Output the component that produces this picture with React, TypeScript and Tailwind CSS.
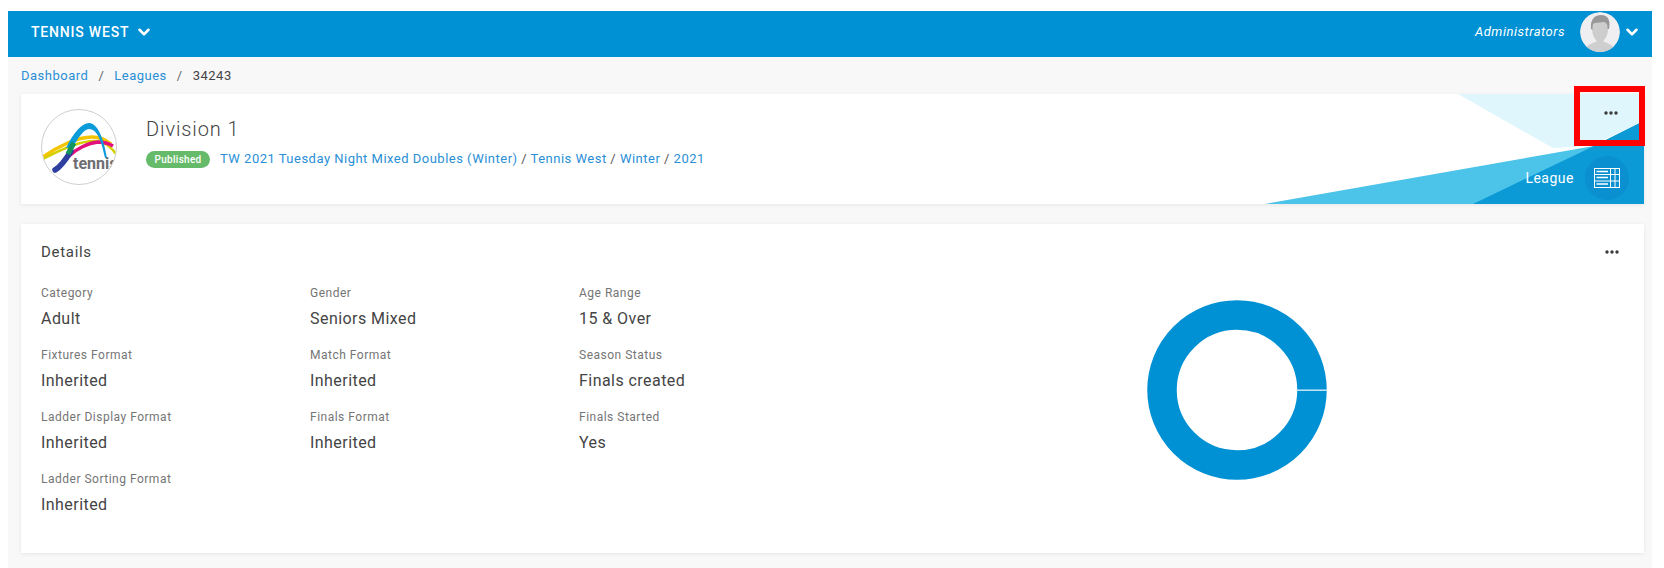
import React from "react";
import { ChevronDown } from "lucide-react";

const F = { fontFamily: "Roboto, sans-serif" };

const rows = [
  [["Category", "Adult"], ["Gender", "Seniors Mixed"], ["Age Range", "15 & Over"]],
  [["Fixtures Format", "Inherited"], ["Match Format", "Inherited"], ["Season Status", "Finals created"]],
  [["Ladder Display Format", "Inherited"], ["Finals Format", "Inherited"], ["Finals Started", "Yes"]],
  [["Ladder Sorting Format", "Inherited"]],
];

function Dots() {
  return (
    <svg width="14" height="4" viewBox="0 0 14 4" className="block">
      <circle cx="2" cy="2" r="1.7" fill="#3a3a3a" />
      <circle cx="7" cy="2" r="1.7" fill="#3a3a3a" />
      <circle cx="12" cy="2" r="1.7" fill="#3a3a3a" />
    </svg>
  );
}

function Logo() {
  return (
    <div className="w-[76px] h-[76px] mb-[4px] rounded-full border border-[#cfcfcf] bg-white overflow-hidden shrink-0">
      <svg width="74" height="74" viewBox="0 0 74 74" fill="none">
        <path d="M1 47 C15 37 35 27 50 27 C58 27 64 30 69 34" stroke="#f5c400" strokeWidth="3.5" />
        <path d="M1 49 C16 41 36 31 52 31 C62 31 70 38 75 45" stroke="#d3d000" strokeWidth="2.5" />
        <path d="M27 46 C34 39 46 33 56 32 C62 32 66 33 71 36" stroke="#e0107c" strokeWidth="3.5" />
        <path d="M24 38 C32 22 40 13 47 13 C56 13 62 30 65 48 L63 48 C60 34 56 19 47 19 C42 19 36 28 31 37 Z" fill="#0b9bd8" />
        <path d="M13 60 C20 56 26 46 29 41" stroke="#2f3f9f" strokeWidth="5.5" strokeLinecap="round" />
        <path d="M26 44 C28 40 30 36 32 33" stroke="#12955a" strokeWidth="5" />
        <text x="31" y="59" fill="#6d6e71" fontSize="16" fontWeight="700" style={F}>tennis</text>
      </svg>
    </div>
  );
}

function Avatar() {
  return (
    <svg width="40" height="40" viewBox="0 0 40 40" className="block rounded-full">
      <circle cx="20" cy="20" r="20" fill="#efeef0" />
      <path d="M4 37 C8 32 14 31 17 29 L23 29 C26 31 32 32 36 37 C30 42 10 42 4 37Z" fill="#cfcfcf" />
      <path d="M12 16 C11 7 15 4 21 4 C27 4 30 8 28 17 C28 24 24 30 20 30 C16 30 12 24 12 16Z" fill="#cdcdcd" />
      <path d="M11 17 C10 7 15 3 21 3 C27 3 31 7 29 17 L27.5 17 C28 12 26 10 23 10 C19 11 15 10 13 12 C12.5 14 12.5 16 12.5 18Z" fill="#989898" />
    </svg>
  );
}

export default function App() {
  return (
    <div className="bg-white h-[568px] pt-[11px] pl-[8px] pr-[12px] overflow-hidden" style={F}>
      <div className="bg-[#f8f8f8] h-[557px] flex flex-col">
        <header className="h-[46px] bg-[#0090d4] flex items-center justify-between pl-[23px] pr-[11px] pb-[4px] text-white shrink-0">
          <div className="flex items-center gap-[6px] text-[14px] font-medium tracking-[0.8px]">
            <span>TENNIS WEST</span>
            <ChevronDown size={18} strokeWidth={3.4} />
          </div>
          <div className="flex items-center">
            <span className="text-[13px] italic tracking-[0.5px] mr-[15px]">Administrators</span>
            <Avatar />
            <ChevronDown size={18} strokeWidth={3.4} className="ml-[3px]" />
          </div>
        </header>

        <nav className="h-[37px] flex items-center pl-[13px] text-[13px] tracking-[0.5px] text-[#444] shrink-0">
          <span className="text-[#2a8fd6]">Dashboard</span>
          <span className="mx-[10px] text-[#666]">/</span>
          <span className="text-[#2a8fd6]">Leagues</span>
          <span className="mx-[10px] text-[#666]">/</span>
          <span>34243</span>
        </nav>

        <section className="relative ml-[13px] mr-[8px] h-[110px] bg-white shadow-[0_1px_4px_rgba(0,0,0,0.08)] flex items-center pl-[20px] shrink-0">
          <Logo />
          <div className="ml-[29px] mb-[14px]">
            <h1 className="text-[20px] leading-[28px] font-light tracking-[0.9px] text-[#444]">Division 1</h1>
            <div className="flex items-center mt-[6px]">
              <span className="w-[64px] h-[17px] rounded-full bg-[#66bb6a] text-white text-[10px] font-medium tracking-[0.3px] flex items-center justify-center">Published</span>
              <span className="ml-[10px] text-[13px] tracking-[0.49px] text-[#555]">
                <span className="text-[#2a8fd6]">TW 2021 Tuesday Night Mixed Doubles (Winter)</span>
                {" / "}
                <span className="text-[#2a8fd6]">Tennis West</span>
                {" / "}
                <span className="text-[#2a8fd6]">Winter</span>
                {" / "}
                <span className="text-[#2a8fd6]">2021</span>
              </span>
            </div>
          </div>

          <svg className="absolute right-0 top-0" width="380" height="110" viewBox="0 0 380 110">
            <polygon points="194,0 380,0 380,27 326,52 289,54" fill="#dff6fc" />
            <polygon points="1,110 330,52 380,27 380,110" fill="#4cc3e8" />
            <polygon points="330,52 380,27 380,50 305,66" fill="#2a9fdc" />
            <polygon points="209,110 330,52 380,27 380,110" fill="#0c9ad6" />
          </svg>
          <div className="absolute right-[15px] top-[62px] flex items-center text-white">
            <span className="text-[14px] tracking-[0.5px] mr-[11px]">League</span>
            <div className="w-[44px] h-[44px] rounded-full bg-[#0a8fd0] flex items-center justify-center">
              <svg width="26" height="20" viewBox="0 0 26 20" fill="none" stroke="#fff" strokeWidth="1">
                <rect x="0.5" y="0.5" width="25" height="19" />
                <path d="M16.5 0.5V19.5M21 0.5V19.5M0.5 6.5H25.5M0.5 13H25.5" />
                <path d="M2.5 3.5H14M2.5 9.5H14M2.5 16H14" strokeWidth="1.6" />
              </svg>
            </div>
          </div>
          <div className="absolute right-[26px] top-[17px]"><Dots /></div>
          <div className="absolute right-[-1px] top-[-8px] w-[71px] h-[60px] border-[6px] border-[#ff0000]" />
        </section>

        <section className="ml-[13px] mr-[8px] mt-[20px] h-[329px] bg-white shadow-[0_1px_4px_rgba(0,0,0,0.08)] px-[20px] relative shrink-0 flex">
          <div className="w-[807px] shrink-0">
            <div className="h-[56px] flex items-center text-[15px] tracking-[0.7px] text-[#444]">Details</div>
            <div className="flex flex-col mt-[4px]">
              {rows.map((row, i) => (
                <div key={i} className="grid grid-cols-[269px_269px_269px] h-[62px]">
                  {row.map(([label, value]) => (
                    <div key={label}>
                      <div className="text-[12px] leading-[18px] tracking-[0.5px] text-[#757575]">{label}</div>
                      <div className="mt-[7px] text-[16px] leading-[20px] tracking-[0.45px] text-[#444]">{value}</div>
                    </div>
                  ))}
                </div>
              ))}
            </div>
          </div>
          <div className="flex-1 flex">
            <svg width="180" height="180" viewBox="0 0 180 180" className="ml-[299px] mt-[76px] shrink-0">
              <circle cx="90" cy="90" r="75" fill="none" stroke="#0090d4" strokeWidth="29.5" />
              <rect x="150" y="89.5" width="30" height="1.4" fill="#d6eef9" />
            </svg>
          </div>
          <div className="absolute right-[25px] top-[26px]"><Dots /></div>
        </section>
      </div>
    </div>
  );
}
